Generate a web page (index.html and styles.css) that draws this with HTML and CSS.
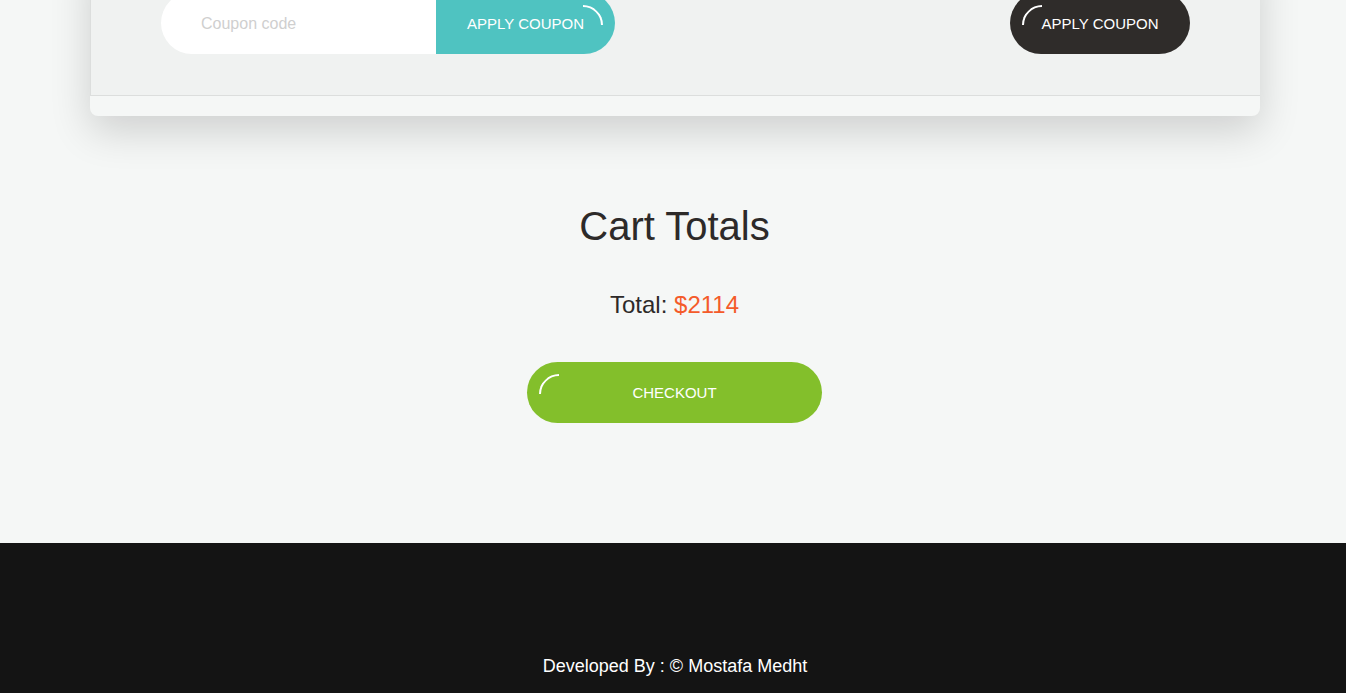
FILE: index.html
```html
<!DOCTYPE html>
<html lang="en">
<head>
<meta charset="utf-8">
<title>Cart</title>
<link rel="stylesheet" href="styles.css">
</head>
<body>
<main class="page">
  <section class="cart-card">
    <div class="cart-actions">
      <form class="coupon">
        <input class="coupon-input" type="text" placeholder="Coupon code">
        <button class="btn btn-teal spin-right" type="button">Apply Coupon</button>
      </form>
      <button class="btn btn-dark spin-left" type="button">Apply Coupon</button>
    </div>
    <div class="cart-foot"></div>
  </section>

  <section class="totals">
    <h2 class="totals-title">Cart Totals</h2>
    <p class="totals-line">Total: <span class="totals-amount">$2114</span></p>
    <button class="btn btn-green spin-left" type="button">Checkout</button>
  </section>
</main>
<footer class="site-footer">
  <p class="credit">Developed By : © Mostafa Medht</p>
</footer>
</body>
</html>
```

FILE: styles.css
```css
* { box-sizing: border-box; }

html, body {
  margin: 0;
  padding: 0;
  background: #f5f7f6;
  font-family: "Liberation Sans", Arial, sans-serif;
  color: #2d2a29;
}

.page {
  padding-left: 4px;
}

.cart-card {
  width: 1170px;
  margin: -48px auto 0;
  background: #f5f7f6;
  border-radius: 0 0 8px 8px;
  box-shadow: 0 15px 40px rgba(0, 0, 0, 0.16);
  overflow: hidden;
}

.cart-actions {
  display: flex;
  justify-content: space-between;
  align-items: center;
  padding: 40px 70px 41px 70px;
  background: #f0f2f1;
  border-left: 1px solid #dcdedd;
  border-bottom: 1px solid #dcdedd;
}

.coupon {
  display: flex;
  margin: 0;
}

.coupon-input {
  width: 275px;
  height: 62px;
  border: 0;
  outline: 0;
  background: #fff;
  border-radius: 31px 0 0 31px;
  padding: 2px 0 0 40px;
  font-family: "Liberation Sans", Arial, sans-serif;
  font-size: 16px;
  color: #333;
}

.coupon-input::placeholder {
  color: #cfcfcf;
}

.btn {
  position: relative;
  border: 0;
  height: 62px;
  padding: 0;
  font-family: "Liberation Sans", Arial, sans-serif;
  font-size: 15px;
  text-transform: uppercase;
  color: #fff;
  cursor: pointer;
}

.btn::before {
  content: "";
  position: absolute;
  top: 13px;
  width: 36px;
  height: 36px;
  border-radius: 50%;
  border: 2px solid transparent;
  border-top-color: #fff;
}

.spin-left::before {
  left: 12px;
  transform: rotate(-45deg);
}

.spin-right::before {
  right: 12px;
  transform: rotate(45deg);
}

.btn-teal {
  width: 179px;
  background: #4fc3c1;
  border-radius: 0 31px 31px 0;
}

.btn-dark {
  width: 180px;
  background: #2f2c2a;
  border-radius: 31px;
}

.cart-foot {
  height: 20px;
}

.totals {
  display: flex;
  flex-direction: column;
  align-items: center;
  margin-left: -1px;
  padding: 86px 0 120px;
}

.totals-title {
  margin: 0;
  font-size: 40px;
  font-weight: 400;
  line-height: 48px;
  color: #2d2a29;
}

.totals-line {
  margin: 40px 0 0;
  font-size: 24px;
  line-height: 30px;
  color: #2d2a29;
}

.totals-amount {
  color: #f45b2a;
}

.btn-green {
  margin-top: 42px;
  width: 295px;
  height: 61px;
  background: #83bf2b;
  border-radius: 31px;
}

.btn-green::before {
  top: 12px;
}

.site-footer {
  background: #141414;
  padding: 112px 0 16px 4px;
  text-align: center;
}

.credit {
  margin: 0;
  font-size: 18px;
  line-height: 22px;
  color: #fff;
}
```
